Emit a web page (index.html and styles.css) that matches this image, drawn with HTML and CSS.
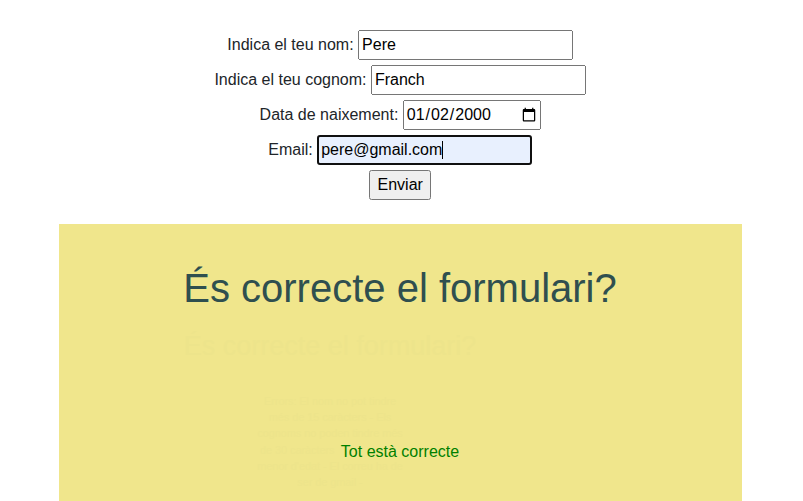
FILE: index.html
```html
<!DOCTYPE html>
<html lang="ca">
<head>
<meta charset="utf-8">
<title>Formulari</title>
<link rel="stylesheet" href="styles.css">
</head>
<body>
<form class="form">
  <div class="row"><label for="nom">Indica el teu nom:</label> <input id="nom" type="text" value="Pere"></div>
  <div class="row"><label for="cognom">Indica el teu cognom:</label> <input id="cognom" type="text" value="Franch"></div>
  <div class="row"><label for="data">Data de naixement:</label> <input id="data" type="date" value="2000-01-02"></div>
  <div class="row"><label for="email">Email:</label> <span class="field active" id="email">pere@gmail.com<i class="caret"></i></span></div>
  <div class="row"><button type="button">Enviar</button></div>
</form>
<section class="result">
  <div class="ghost" aria-hidden="true">
    <div class="ghost-title">És correcte el formulari?</div>
    <div class="ghost-errors">
      <div>Errors: El nom no pot tindre</div>
      <div>més de 15 caràcters - Els</div>
      <div>cognoms no poden tindre més</div>
      <div class="ghost-short">de 30 caràcters</div>
      <div>menor d'edat - El correu ha de</div>
      <div>ser de gmail -</div>
    </div>
  </div>
  <h1>És correcte el formulari?</h1>
  <p>Tot està correcte</p>
</section>
</body>
</html>
```
FILE: styles.css
```css
* { box-sizing: border-box; }
body { margin: 0; height: 501px; overflow: hidden; background: #fff; color: #212529; font: 16px/24px "Liberation Sans", Arial, sans-serif; }
.form { width: 682.4px; margin: 0 auto 0 59px; padding-top: 30px; }
.row { height: 35px; display: flex; justify-content: center; align-items: flex-start; gap: 4.45px; line-height: 30px; }
input, button { font: inherit; line-height: 24px; height: 30px; margin: 0; }
input { width: 215px; }
input[type="date"] { width: 138px; }
button { width: 62px; padding: 0; }
.field { width: 215px; height: 30px; line-height: 30px; color: #000; display: flex; align-items: center; }
.active { background: #e8f0fe; border: 2px solid #101010; border-radius: 3px; padding: 0 2px; }
.caret { width: 1px; height: 18px; background: #000; }
.result { position: relative; margin: 19px 61px 0 59px; padding-right: 1px; height: 277px; background: #f0e68c; text-align: center; overflow: hidden; }
h1 { margin: 40px 0 0; font-size: 40px; line-height: 48px; font-weight: 400; color: #2f4f4f; }
p { margin: 128px 0 0; color: #008000; }

/* Faint trace of the previous validation message */
.ghost { position: absolute; top: 106px; left: 121px; width: 300px; color: #ede48b; }
.ghost-title { font-size: 27px; line-height: 32px; white-space: nowrap; }
.ghost-errors { margin-top: 31px; font-size: 10.8px; line-height: 16.2px; }
.ghost-short { padding-left: 80px; text-align: left; }
```
